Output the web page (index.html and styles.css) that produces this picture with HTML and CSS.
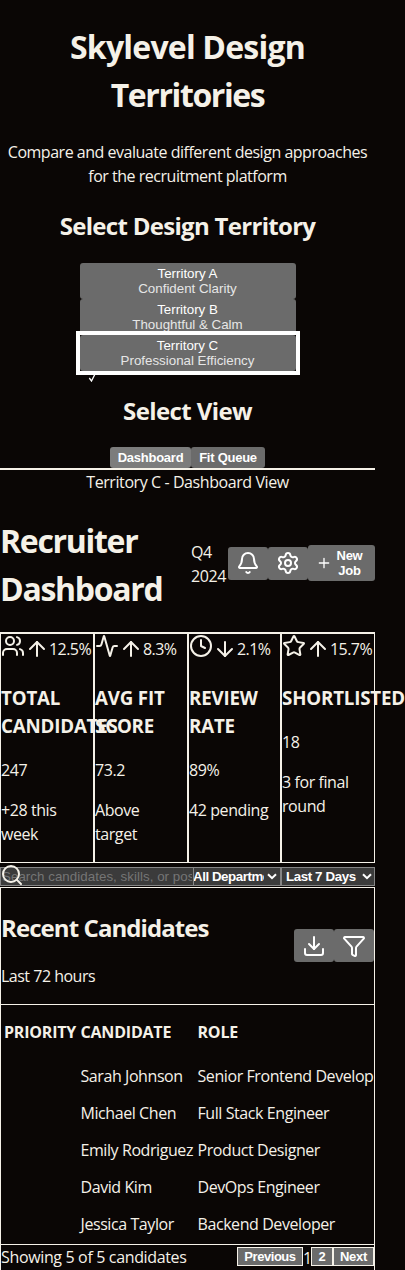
FILE: index.html
```html
<!DOCTYPE html>
<html lang="en">
<head>
<meta charset="utf-8">
<title>Skylevel Design Territories</title>
<link rel="stylesheet" href="styles.css">
</head>
<body>
<svg class="defs" width="0" height="0">
  <symbol id="up" viewBox="0 0 24 24"><path d="m5 12 7-7 7 7"/><path d="M12 19V5"/></symbol>
  <symbol id="down" viewBox="0 0 24 24"><path d="M12 5v14"/><path d="m19 12-7 7-7-7"/></symbol>
  <symbol id="chevron" viewBox="0 0 10 7"><path d="m1 1.2 4 4 4-4"/></symbol>
</svg>
<div class="page">
  <header class="intro">
    <h1>Skylevel Design<br><span class="tight">Territories</span></h1>
    <p>Compare and evaluate different design approaches<br>for the recruitment platform</p>
  </header>
  <section class="picker">
    <h2>Select Design Territory</h2>
    <div class="territories">
      <button class="territory"><span>Territory A</span><small>Confident Clarity</small></button>
      <button class="territory"><span>Territory B</span><small>Thoughtful &amp; Calm</small></button>
      <button class="territory selected"><span>Territory C</span><small>Professional Efficiency</small><svg class="check" viewBox="0 0 9 9"><path d="m1.3 5 2.2 3L7.3.5"/></svg></button>
    </div>
  </section>
  <section class="views">
    <h2>Select View</h2>
    <div class="view-row"><button class="active">Dashboard</button><button>Fit Queue</button></div>
  </section>
  <div class="crumb">Territory C - Dashboard View</div>

  <header class="dash-head">
    <h1>Recruiter<br>Dashboard</h1>
    <span class="period">Q4<br>2024</span>
    <div class="actions">
      <button class="icon-btn"><svg class="icon" viewBox="0 0 24 24"><path d="M10.268 21a2 2 0 0 0 3.464 0"/><path d="M3.262 15.326A1 1 0 0 0 4 17h16a1 1 0 0 0 .74-1.673C19.41 13.956 18 12.499 18 8A6 6 0 0 0 6 8c0 4.499-1.411 5.956-2.738 7.326"/></svg></button>
      <button class="icon-btn"><svg class="icon" viewBox="0 0 24 24"><path d="M9.671 4.136a2.34 2.34 0 0 1 4.659 0 2.34 2.34 0 0 0 3.319 1.915 2.34 2.34 0 0 1 2.33 4.033 2.34 2.34 0 0 0 0 3.831 2.34 2.34 0 0 1-2.33 4.033 2.34 2.34 0 0 0-3.319 1.915 2.34 2.34 0 0 1-4.659 0 2.34 2.34 0 0 0-3.32-1.915 2.34 2.34 0 0 1-2.33-4.033 2.34 2.34 0 0 0 0-3.831A2.34 2.34 0 0 1 6.35 6.051a2.34 2.34 0 0 0 3.319-1.915"/><circle cx="12" cy="12" r="3"/></svg></button>
      <button class="new-job"><svg class="icon" viewBox="0 0 24 24"><path d="M5 12h14M12 5v14"/></svg><span>New<br>Job</span></button>
    </div>
  </header>

  <section class="metrics">
    <article>
      <div class="trend"><svg class="icon" viewBox="0 0 24 24"><path d="M16 21v-2a4 4 0 0 0-4-4H6a4 4 0 0 0-4 4v2"/><path d="M16 3.128a4 4 0 0 1 0 7.744"/><path d="M22 21v-2a4 4 0 0 0-3-3.87"/><circle cx="9" cy="7" r="4"/></svg><svg class="icon arrow"><use href="#up"/></svg><span>12.5%</span></div>
      <h3>TOTAL<br>CANDIDATES</h3><p>247</p><p>+28 this<br>week</p>
    </article>
    <article>
      <div class="trend"><svg class="icon" viewBox="0 0 24 24"><path d="M22 12h-2.480a2 2 0 0 0-1.930 1.460l-2.350 8.360a.25.25 0 0 1-.480 0L9.240 2.180a.25.25 0 0 0-.480 0l-2.350 8.360A2 2 0 0 1 4.490 12H2"/></svg><svg class="icon arrow"><use href="#up"/></svg><span>8.3%</span></div>
      <h3>AVG FIT<br>SCORE</h3><p>73.2</p><p>Above<br>target</p>
    </article>
    <article>
      <div class="trend"><svg class="icon" viewBox="0 0 24 24"><circle cx="12" cy="12" r="10"/><path d="M12 6v6l4 2"/></svg><svg class="icon arrow"><use href="#down"/></svg><span>2.1%</span></div>
      <h3>REVIEW<br>RATE</h3><p>89%</p><p>42 pending</p>
    </article>
    <article>
      <div class="trend"><svg class="icon" viewBox="0 0 24 24"><path d="M11.525 2.295a.53.53 0 0 1 .95 0l2.310 4.679a2.123 2.123 0 0 0 1.595 1.160l5.166.756a.53.53 0 0 1 .294.904l-3.736 3.638a2.123 2.123 0 0 0-.611 1.878l.882 5.140a.53.53 0 0 1-.771.560l-4.618-2.428a2.122 2.122 0 0 0-1.973 0L6.396 21.010a.53.53 0 0 1-.770-.560l.881-5.139a2.122 2.122 0 0 0-.611-1.879L2.160 9.795a.53.53 0 0 1 .294-.906l5.165-.755a2.122 2.122 0 0 0 1.597-1.160z"/></svg><svg class="icon arrow"><use href="#up"/></svg><span>15.7%</span></div>
      <h3>SHORTLISTED</h3><p>18</p><p>3 for final<br>round</p>
    </article>
  </section>

  <div class="filters">
    <div class="search"><span>Search candidates, skills, or positions</span><svg class="icon" viewBox="0 0 24 24"><circle cx="11" cy="11" r="8"/><path d="m21 21-4.340-4.340"/></svg></div>
    <div class="select dept"><span>All Departments</span><svg class="chevron"><use href="#chevron"/></svg></div>
    <div class="select days"><span>Last 7 Days</span><svg class="chevron"><use href="#chevron"/></svg></div>
  </div>

  <section class="card">
    <header class="card-head">
      <div><h2>Recent Candidates</h2><p>Last 72 hours</p></div>
      <div class="actions">
        <button class="icon-btn"><svg class="icon" viewBox="0 0 24 24"><path d="M12 15V3"/><path d="M21 15v4a2 2 0 0 1-2 2H5a2 2 0 0 1-2-2v-4"/><path d="m7 10 5 5 5-5"/></svg></button>
        <button class="icon-btn"><svg class="icon" viewBox="0 0 24 24"><path d="M10 20a1 1 0 0 0 .553.895l2 1A1 1 0 0 0 14 21v-7a2 2 0 0 1 .517-1.341L21.740 4.670A1 1 0 0 0 21 3H3a1 1 0 0 0-.742 1.670l7.225 7.989A2 2 0 0 1 10 14z"/></svg></button>
      </div>
    </header>
    <div class="table">
      <div class="row head"><span>PRIORITY</span><span>CANDIDATE</span><span>ROLE</span></div>
      <div class="row"><span></span><span>Sarah Johnson</span><span>Senior Frontend Develop</span></div>
      <div class="row"><span></span><span>Michael Chen</span><span>Full Stack Engineer</span></div>
      <div class="row"><span></span><span>Emily Rodriguez</span><span>Product Designer</span></div>
      <div class="row"><span></span><span>David Kim</span><span>DevOps Engineer</span></div>
      <div class="row"><span></span><span>Jessica Taylor</span><span>Backend Developer</span></div>
    </div>
    <footer class="card-foot">
      <span>Showing 5 of 5 candidates</span>
      <div class="pages"><button class="prev">Previous</button><span>1</span><button class="two">2</button><button class="next">Next</button></div>
    </footer>
  </section>
</div>
</body>
</html>
```
FILE: styles.css
```css
* { box-sizing: border-box; }
html { background: #0a0605; }
body { margin: 0; height: 1270px; overflow: hidden; background: #0a0605; color: #f5f1e8; font: 16px/24px "Open Sans", "Noto Sans", sans-serif; letter-spacing: -0.42px; white-space: nowrap; }
h1, h2, h3, p { margin: 0; }
h1 { font-size: 32px; line-height: 48px; letter-spacing: -0.8px; }
h1 .tight { letter-spacing: -1.4px; }
h2 { font-size: 24px; line-height: 36px; letter-spacing: -0.7px; }
h3 { font-size: 18.72px; line-height: 28px; letter-spacing: -0.17px; }
button { display: block; margin: 0; padding: 0; border: 0; border-radius: 3px; background: #6b6b6b; color: #fff; font: bold 13px/15px "Liberation Sans", Arial, sans-serif; letter-spacing: -0.25px; }
.defs { display: block; height: 0; }
.icon { display: block; flex: none; width: 24px; height: 24px; fill: none; stroke: currentColor; stroke-width: 2; stroke-linecap: round; stroke-linejoin: round; }
.page { width: 375px; height: 1270px; display: flex; flex-direction: column; }

.intro { padding-top: 23px; text-align: center; }
.intro p { margin-top: 21px; letter-spacing: -0.48px; }
.picker { padding-top: 20px; text-align: center; }
.territories { width: 216px; margin: 19px 0 0 80px; }
.territory { position: relative; width: 216px; height: 36px; padding-bottom: 1px; font-weight: normal; text-align: center; letter-spacing: 0; }
.territory span, .territory small { display: block; padding-right: 1px; font-size: 13.333px; line-height: 15px; }
.territory small { color: #e6e6e6; }
.selected::after { content: ""; position: absolute; inset: -4px; border: 4px solid #fff; }
.check { position: absolute; left: 8px; top: 38px; width: 9px; height: 9px; fill: none; stroke: #fff; stroke-width: 1.3; clip-path: inset(2px 0 0 0); }
.views { padding-top: 22px; text-align: center; border-bottom: 2px solid #f5f1e8; }
.views h2 { letter-spacing: -0.6px; }
.view-row { display: flex; justify-content: center; margin-top: 18px; }
.view-row button { width: 74px; height: 21px; }
.view-row .active { width: 81px; background: #7c7c7c; }
.crumb { height: 24px; text-align: center; }

.dash-head { display: flex; align-items: center; height: 96px; margin-top: 23px; }
.dash-head h1 { width: 191px; letter-spacing: -1.3px; }
.period { width: 37px; line-height: 24px; padding-bottom: 2px; }
.actions { display: flex; align-items: center; }
.dash-head .actions { padding-bottom: 4px; }
.icon-btn { width: 40px; height: 33px; padding: 0 8px; }
.new-job { display: flex; align-items: center; width: 67px; height: 36px; padding-left: 8px; }
.new-job .icon { width: 16px; height: 16px; }
.new-job span { width: 35px; text-align: center; }

.metrics { display: grid; grid-template-columns: 94px 94px 93px 94px; height: 231px; margin-top: 19px; border-top: 1px solid #f5f1e8; }
.metrics article { border: 1px solid #f5f1e8; }
.trend { display: flex; height: 31px; }
.trend .arrow { margin-top: 3px; }
.trend span { padding-top: 3px; letter-spacing: -0.55px; }
.metrics h3 { margin-top: 19px; }
.metrics p { margin-top: 16px; }
.metrics h3 + p { margin-top: 18px; }

.filters { display: flex; height: 19px; margin-top: 4px; font: 13.333px/17px "Liberation Sans", Arial, sans-serif; letter-spacing: 0; }
.filters > div { height: 19px; border: 1px solid #858585; background: #3b3b3b; }
.search { position: relative; width: 194px; padding-left: 1px; color: #757575; }
.search span { display: block; width: 190px; overflow: hidden; letter-spacing: 0.04px; }
.search .icon { position: absolute; left: -1px; top: -5px; color: #f5f1e8; }
.select { display: flex; align-items: center; color: #fff; font-weight: bold; }
.select span { overflow: hidden; }
.filters .dept { width: 87px; border-left: 0; }
.dept span { width: 71px; margin-left: -1px; padding-right: 1px; letter-spacing: -0.45px; }
.dept .chevron { margin-left: 3px; }
.days { width: 94px; padding-left: 4px; }
.days span { width: 75px; letter-spacing: -0.4px; }
.chevron { flex: none; width: 10px; height: 7px; margin-left: 1px; fill: none; stroke: #fff; stroke-width: 2; }

.card { flex: 1; margin-top: 1px; border: 1px solid #f5f1e8; border-bottom: 0; }
.card-head { display: flex; justify-content: space-between; height: 117px; padding-top: 22px; border-bottom: 1px solid #f5f1e8; }
.card-head h2 { letter-spacing: -0.92px; }
.card-head p { margin-top: 18px; letter-spacing: -0.5px; }
.card-head .actions { align-items: flex-start; padding-top: 19px; }
.table { height: 240px; padding-top: 9px; border-bottom: 1px solid #f5f1e8; }
.row { display: grid; grid-template-columns: 76.5px 117px 176px; height: 37px; padding-left: 3px; line-height: 37px; }
.row.head { height: 44px; font-weight: bold; letter-spacing: -0.2px; }
.card-foot { display: flex; justify-content: space-between; height: 25px; letter-spacing: -0.35px; }
.pages { display: flex; padding-top: 2px; }
.pages button { height: 19px; border: 1px solid #f5f1e8; border-radius: 0; }
.pages span { width: 8px; text-align: center; line-height: 22px; }
.prev { width: 66px; letter-spacing: -0.45px; }
.two { width: 22px; }
.next { width: 41px; }
```
